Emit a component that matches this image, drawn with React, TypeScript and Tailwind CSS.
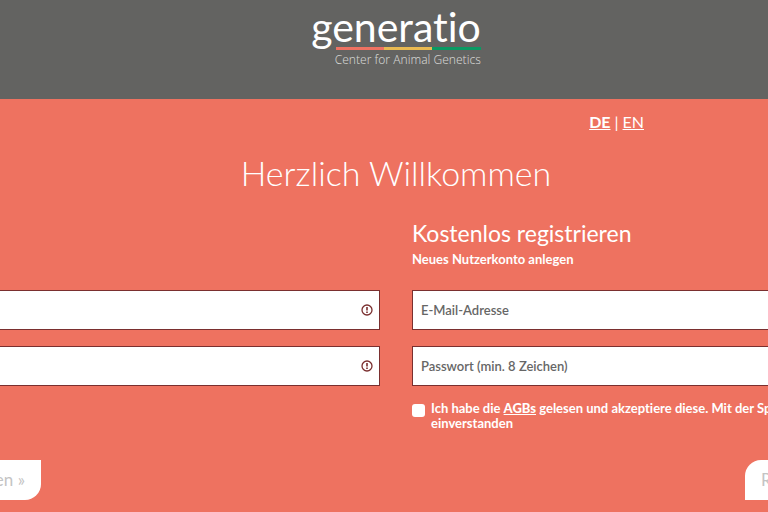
import { useState } from "react";

interface FieldProps {
  id: string;
  label: string;
  type: string;
  placeholder?: string;
  invalid?: boolean;
}

function Field({ id, label, type, placeholder, invalid }: FieldProps) {
  return (
    <div className="flex h-10 items-center border border-[#7a2f2f] bg-white">
      <label htmlFor={id} className="sr-only">
        {label}
      </label>
      <input
        id={id}
        type={type}
        placeholder={placeholder}
        className="h-full min-w-0 flex-1 px-2 text-[13px] font-semibold text-[#666] outline-none placeholder:text-[#666]"
      />
      {invalid && (
        <svg viewBox="0 0 12 12" className="mr-[6px] size-3 text-[#7a2f2f]" fill="none" stroke="currentColor">
          <circle cx="6" cy="6" r="5" strokeWidth="1.3" />
          <path d="M6 3v3.6" strokeWidth="1.6" />
          <path d="M6 7.6v1.4" strokeWidth="1.6" />
        </svg>
      )}
    </div>
  );
}

function Logo() {
  return (
    <div className="ml-6 flex flex-col items-end text-white">
      <span className="text-[41px] leading-[44px]">generatio</span>
      <div className="-mt-[2px] flex h-[3px] w-[145px]">
        <span className="flex-1 bg-[#ef7262]" />
        <span className="flex-1 bg-[#e9b951]" />
        <span className="flex-1 bg-[#0a9a63]" />
      </div>
      <span className="mt-[2px] font-['Noto_Sans',sans-serif] text-[12px] leading-4 font-light text-[#d4d4d2]">
        Center for Animal Genetics
      </span>
    </div>
  );
}

export default function App() {
  const [accepted, setAccepted] = useState(false);

  return (
    <div className="min-h-screen overflow-hidden bg-[#ee7260] font-[Lato,sans-serif] text-white [font-variant-ligatures:none]">
      <header className="flex h-[99px] justify-center bg-[#636361] pt-[5px]">
        <Logo />
      </header>

      {/* The form area is wider than small windows and is cut off on both sides */}
      <main className="-ml-[88px] w-[968px]">
        <nav className="flex justify-end gap-1 pt-[11px] pr-[236px] text-[16px] leading-6">
          <a href="#de" className="font-bold underline">DE</a>
          <span>|</span>
          <a href="#en" className="underline">EN</a>
        </nav>

        <h1 className="mt-[19px] text-center text-[34px] leading-10 font-light">
          Herzlich Willkommen
        </h1>

        <div className="mt-6 grid grid-cols-2 gap-8">
          <form className="flex flex-col pt-[73px]">
            <div className="flex flex-col gap-4">
              <Field id="login-mail" label="E-Mail" type="email" invalid />
              <Field id="login-pass" label="Passwort" type="password" invalid />
            </div>
            <button
              type="button"
              className="mt-[74px] h-10 w-[129px] rounded-br-2xl bg-white pr-4 text-right text-[17px] text-[#c4c4c4]"
            >
              Anmelden »
            </button>
          </form>

          <form className="flex flex-col">
            <h2 className="pt-[2px] text-[23px] leading-7">Kostenlos registrieren</h2>
            <p className="mt-1 text-[13px] leading-4 font-bold">Neues Nutzerkonto anlegen</p>
            <div className="mt-[23px] flex flex-col gap-4">
              <Field id="new-mail" label="E-Mail-Adresse" type="email" placeholder="E-Mail-Adresse" />
              <Field id="new-pass" label="Passwort" type="password" placeholder="Passwort (min. 8 Zeichen)" />
            </div>
            <div className="mt-[15px] flex gap-[6px]">
              <input
                id="agb"
                type="checkbox"
                checked={accepted}
                onChange={(e) => setAccepted(e.target.checked)}
                className="mt-[3px] size-[13px] shrink-0 appearance-none rounded-[3px] bg-white checked:bg-[#636361]"
              />
              <label htmlFor="agb" className="text-[13px] leading-[15px] font-bold">
                Ich habe die <a href="#agb" className="font-black underline">AGBs</a> gelesen und
                akzeptiere diese. Mit der Speicherung bin ich einverstanden
              </label>
            </div>
            <button
              type="button"
              className="mt-[29px] h-10 w-[135px] self-end rounded-tl-2xl bg-white pl-4 text-left text-[17px] text-[#c4c4c4]"
            >
              Registrieren »
            </button>
          </form>
        </div>
      </main>
    </div>
  );
}
